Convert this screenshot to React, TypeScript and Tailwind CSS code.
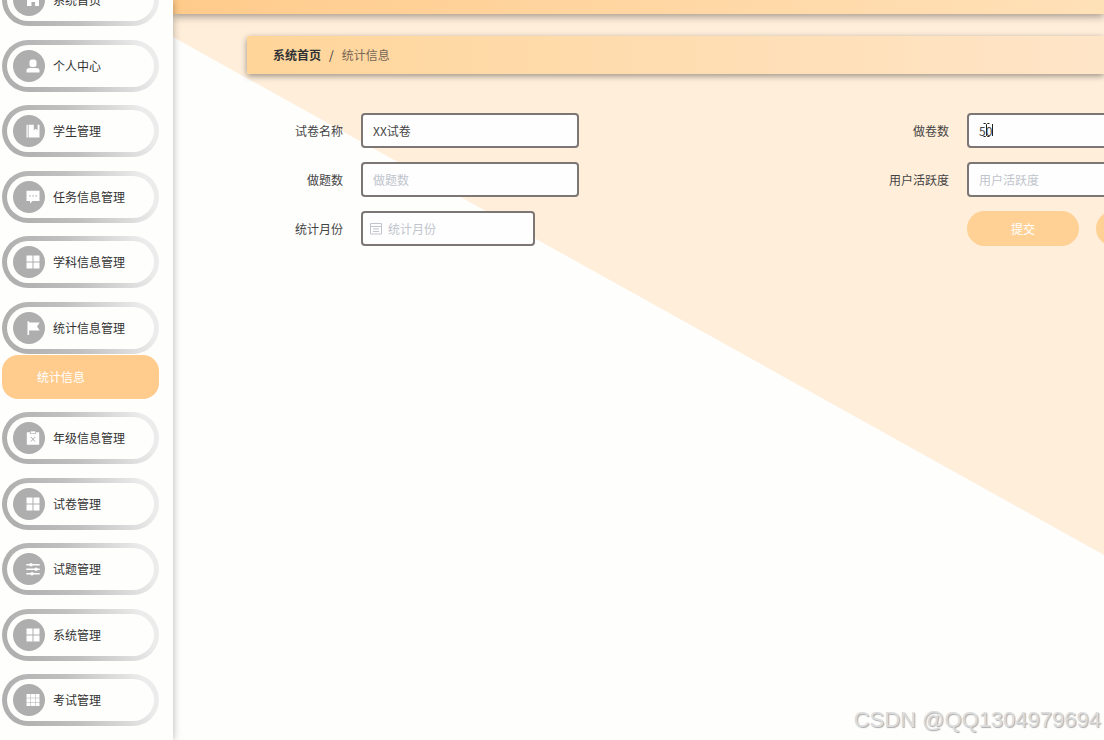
import type { ReactNode } from 'react';

interface MenuItem {
  label: string;
  icon: ReactNode;
  children?: string[];
}

const GridIcon = () => (
  <path d="M.5 .5h6v6h-6zM7.500 .5h6v6h-6zM.5 7.500h6v6h-6zM7.500 7.500h6v6h-6z" />
);

const menuItems: MenuItem[] = [
  { label: '系统首页', icon: <path d="M7 0l7 5.5H13V13H9V9H5.500V13H1V5.500H0z" /> },
  {
    label: '个人中心',
    icon: (
      <>
        <rect x="3.500" y="0.500" width="7" height="7.500" rx="2.500" />
        <path d="M.5 13.500V11.500C.5 9.700 2 9 4 9h6c2 0 3.500.7 3.500 2.500v2z" />
      </>
    ),
  },
  {
    label: '学生管理',
    icon: <path d="M.5 .8h1.300v12.700H.5zM2.600 .8H7.800v5.400l1.900-1.400 1.900 1.400V.8h1.900v12.700H2.600z" />,
  },
  {
    label: '任务信息管理',
    icon: (
      <path
        fillRule="evenodd"
        d="M.5 .8h13v10.200H6.500L4 13.600V11H.5zM3.300 5.200v1.300h1.300V5.200zM6.400 5.200v1.300h1.300V5.200zM9.500 5.200v1.300h1.300V5.200z"
      />
    ),
  },
  { label: '学科信息管理', icon: <GridIcon /> },
  {
    label: '统计信息管理',
    icon: <path d="M1.500 .2h1.600v1.200h10.600L11 5.400l2.700 4.100H3.100v4.500H1.500z" />,
    children: ['统计信息'],
  },
  {
    label: '年级信息管理',
    icon: (
      <>
        <path d="M.8 1.200h3.200v1.900h6V1.200h3.200v12.600H.8z" />
        <path d="M4.700 .3h4.600v2.100H4.700z" />
        <path d="M4.800 6l4.400 4.600M9.200 6L4.800 10.600" className="stroke-[#aeaeae]" />
      </>
    ),
  },
  { label: '试卷管理', icon: <GridIcon /> },
  {
    label: '试题管理',
    icon: (
      <>
        <path d="M.3 2h13.400v1.500H.3zM.3 6.500h13.400V8H.3zM.3 11h13.400v1.500H.3z" />
        <circle cx="5" cy="2.700" r="1.700" />
        <circle cx="10" cy="7.200" r="1.700" />
        <circle cx="6" cy="11.700" r="1.700" />
      </>
    ),
  },
  { label: '系统管理', icon: <GridIcon /> },
  {
    label: '考试管理',
    icon: (
      <path d="M.5 1h4v3.700h-4zM5 1h4v3.700H5zM9.500 1h4v3.700h-4zM.5 5.200h4v3.700h-4zM5 5.200h4v3.700H5zM9.500 5.200h4v3.700h-4zM.5 9.400h4v3.700h-4zM5 9.400h4v3.700H5zM9.500 9.400h4v3.700h-4z" />
    ),
  },
];

const inputClass =
  'h-[35px] w-[218px] rounded-[4px] border-2 border-[#7c7674] bg-[#fefefe] px-[10px] text-xs text-[#444] outline-none placeholder:text-[#c0c4cc]';

function Sidebar() {
  return (
    <aside className="relative z-20 h-screen w-[173px] shrink-0 overflow-hidden bg-[#fefefd] shadow-[0_0_8px_rgba(0,0,0,0.3)]">
      {/* 選單已向下捲動，首項只露出下半部 */}
      <nav className="-mt-[26px] pl-[2px]">
        <ul>
          {menuItems.map((item) => (
            <li key={item.label} className="mb-[14px] w-[157px] even:mb-[13px]">
              <a
                href="#"
                className="block h-[52px] rounded-full bg-linear-[70deg,#b0b0b0_10%,#c0c0c0_45%,#ececec_90%] p-[5px]"
              >
                <span className="flex h-full items-center rounded-full bg-[#fefefd] pl-[6px] text-xs text-[#333]">
                  <span className="mr-2 flex size-8 items-center justify-end rounded-full bg-[#aeaeae] pr-[5px]">
                    <svg viewBox="0 0 14 14" className="size-[14px] fill-[#fefefe]" aria-hidden="true">
                      {item.icon}
                    </svg>
                  </span>
                  {item.label}
                </span>
              </a>
              {item.children?.map((child) => (
                <a
                  key={child}
                  href="#"
                  className="mt-px flex h-11 items-center rounded-[16px] bg-[#ffcc8e] pl-[35px] text-xs text-white"
                >
                  {child}
                </a>
              ))}
            </li>
          ))}
        </ul>
      </nav>
    </aside>
  );
}

function Field({ id, label, children }: { id: string; label: string; children: ReactNode }) {
  return (
    <div className="flex items-center">
      <label htmlFor={id} className="mr-[18px] w-24 text-right text-xs text-[#444]">
        {label}
      </label>
      {children}
    </div>
  );
}

function StatForm() {
  return (
    <form className="mt-[39px] flex" onSubmit={(e) => e.preventDefault()}>
      <div className="flex w-[606px] shrink-0 flex-col gap-[14px]">
        <Field id="paper" label="试卷名称">
          <input id="paper" className={inputClass} defaultValue="XX试卷" />
        </Field>
        <Field id="questions" label="做题数">
          <input id="questions" className={inputClass} placeholder="做题数" />
        </Field>
        <Field id="month" label="统计月份">
          <div className="flex h-[35px] w-[174px] items-center gap-[6px] rounded-[4px] border-2 border-[#7c7674] bg-[#fefefe] px-[7px]">
            <svg viewBox="0 0 12 12" className="size-3 shrink-0 fill-none stroke-[#c0c4cc]" aria-hidden="true">
              <path d="M.5 .5h11v10.500H.5zM.5 3.500h11M3 6h6M3 8.500h6" />
            </svg>
            <input
              id="month"
              className="w-full min-w-0 bg-transparent text-xs outline-none placeholder:text-[#c0c4cc]"
              placeholder="统计月份"
            />
          </div>
        </Field>
      </div>
      <div className="flex w-[606px] shrink-0 flex-col gap-[14px]">
        <Field id="papers" label="做卷数">
          <div className="relative">
            <input id="papers" className={inputClass} defaultValue="50" />
            {/* 輸入游標與滑鼠指標 */}
            <svg
              viewBox="0 0 16 16"
              className="pointer-events-none absolute top-[9px] left-3 size-4 fill-none stroke-[#222]"
              aria-hidden="true"
            >
              <path d="M4.500 1.500h2l1 1 1-1h2M7.500 2.500v11M4.500 14.500h2l1-1 1 1h2M13.500 2v12" />
            </svg>
          </div>
        </Field>
        <Field id="active" label="用户活跃度">
          <input id="active" className={inputClass} placeholder="用户活跃度" />
        </Field>
        <div className="flex gap-[17px] pl-[114px]">
          <button type="submit" className="h-[35px] w-28 rounded-full bg-[#ffd195] text-xs text-white">
            提交
          </button>
          <button type="button" aria-label="取消" className="h-[35px] w-28 rounded-full bg-[#ffd195]" />
        </div>
      </div>
    </form>
  );
}

export default function App() {
  return (
    <div className="flex h-screen overflow-hidden bg-[#fefefd] font-['Noto_Sans_CJK_SC',sans-serif]">
      <Sidebar />
      <div className="relative min-w-0 flex-1 overflow-hidden">
        {/* 斜切背景 */}
        <div className="absolute inset-0 bg-[#ffeeda] [clip-path:polygon(0_0,100%_0,100%_75%,0_5%)]" />
        <header className="relative h-[14px] bg-linear-to-r from-[#ffcb8b] to-[#ffe1b8] shadow-[0_2px_8px_rgba(0,0,0,0.4)]" />
        <main className="relative mt-[22px] pl-[74px]">
          <nav className="flex h-[38px] items-center gap-2 rounded-l-[2px] bg-linear-to-r from-[#ffd599] to-[#ffe5c8] pl-[26px] text-xs shadow-[0_2px_6px_rgba(0,0,0,0.4)]">
            <a href="#" className="font-bold text-[#303133]">
              系统首页
            </a>
            <span className="text-[#303133]">/</span>
            <span className="text-[#776655]">统计信息</span>
          </nav>
          <StatForm />
        </main>
        <div className="absolute right-[3px] bottom-1 font-['Liberation_Sans',sans-serif] text-[22px] leading-8 text-[#dcdcdc] [text-shadow:1px_1px_1px_#aaa]">
          CSDN @QQ1304979694
        </div>
      </div>
    </div>
  );
}
